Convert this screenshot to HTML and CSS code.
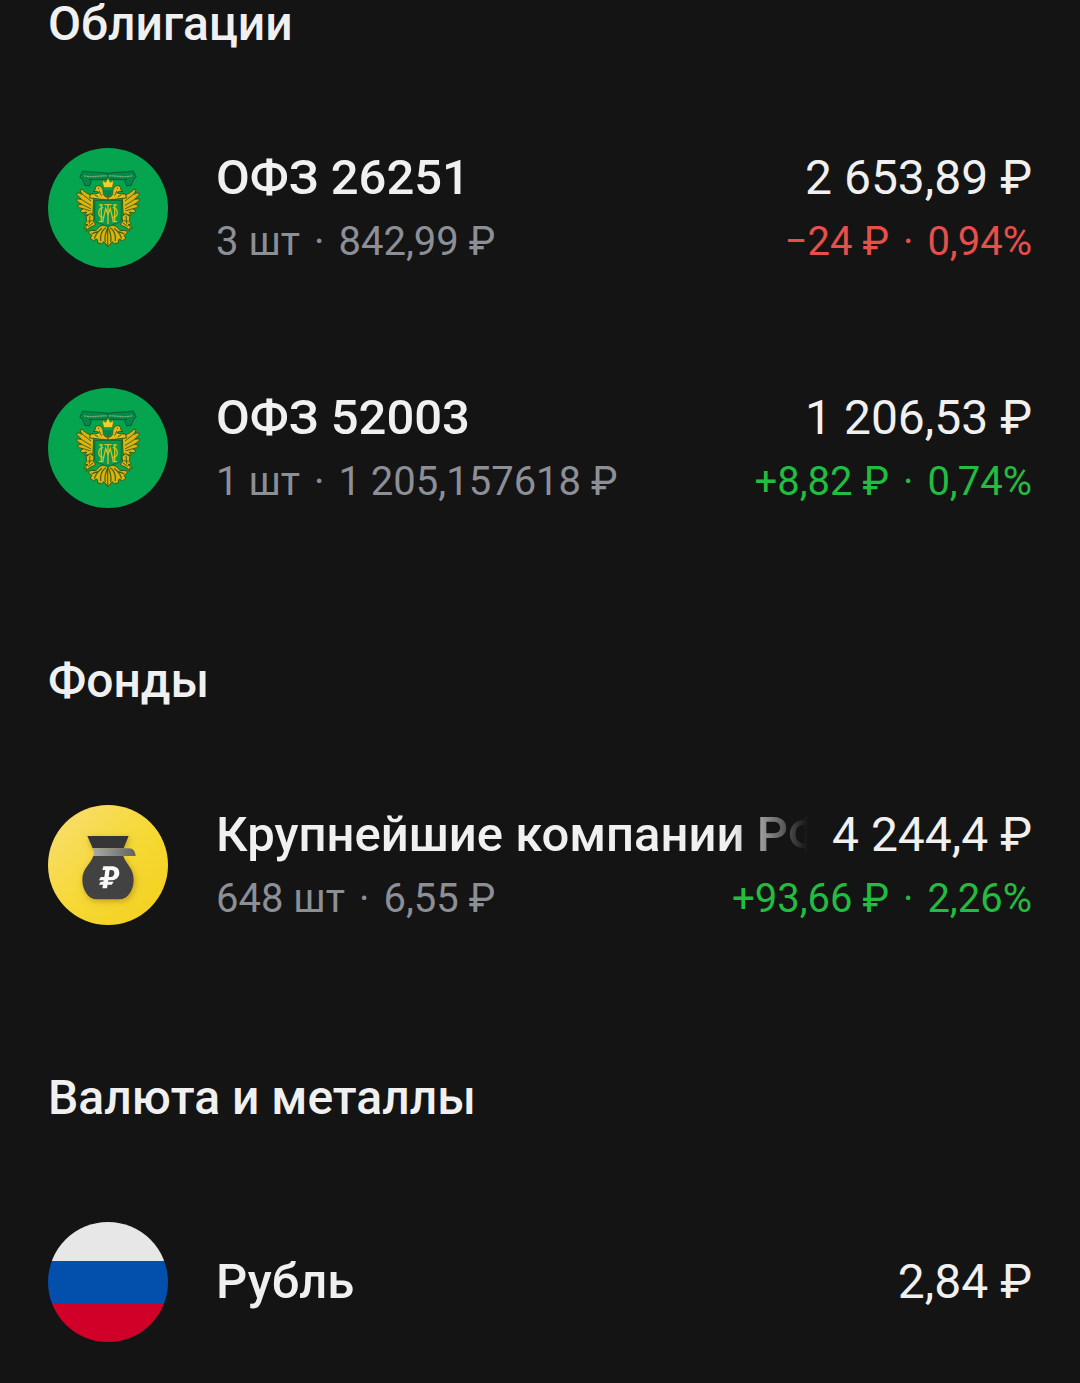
FILE: index.html
```
<!DOCTYPE html>
<html lang="ru">
<head>
    <meta charset="UTF-8">
    <meta name="viewport" content="width=device-width, initial-scale=1.0">
    <title>Портфель</title>
    <link rel="stylesheet" href="styles.css">
</head>
<body>
    <!-- shared icon parts -->
    <svg class="defs" width="0" height="0" aria-hidden="true">
        <defs>
            <g id="eagleHalf" stroke-linejoin="round" stroke-linecap="round">
                <!-- ribbon -->
                <path d="M204 100 C176 94 150 98 128 93 L120 110 L130 124 L134 136 L148 138 L154 122 L148 118 C170 122 186 116 204 118 Z" fill="#07864a" stroke="#0b5a35" stroke-width="3"/>
                <path d="M134 108 C160 113 180 106 204 108" fill="none" stroke="#6fb873" stroke-width="4" stroke-dasharray="3 5"/>
                <!-- wing -->
                <path d="M160 166 C144 164 134 156 126 148 L120 150 L126 163 L112 157 L111 164 L124 178 L109 176 L111 184 L125 193 L112 196 L116 203 L130 206 L120 213 L126 219 L140 216 L134 226 L158 222 Z" fill="#d9b414" stroke="#3d5a14" stroke-width="3"/>
                <path d="M126 162 L152 182 M124 178 L152 196 M125 193 L152 206 M132 207 L150 212" fill="none" stroke="#4c6510" stroke-width="3"/>
                <!-- head and neck -->
                <path d="M150 174 L204 180 L204 170 C196 172 192 166 190 160 C190 148 186 138 176 137 C168 137 164 143 166 149 L159 155 L170 154 L178 158 L164 162 L152 162 Z" fill="#e0bc1a" stroke="#3d5a14" stroke-width="3"/>
                <circle cx="176" cy="145" r="2" fill="#35500f"/>
                <path d="M178 154 L184 166 M166 166 L174 170 M190 164 L198 172" stroke="#4c6510" stroke-width="3" fill="none"/>
                <!-- leg with sceptre -->
                <path d="M150 221 L138 230 L140 244 L134 252 L144 254 L129 264 L140 265 L139 274 L148 263 L160 258 L168 252 L160 246 L162 230 Z" fill="#d6b015" stroke="#3d5a14" stroke-width="3"/>
                <path d="M150 228 L148 250 M144 244 L156 242 M146 258 L158 250" stroke="#4c6510" stroke-width="3" fill="none"/>
                <!-- tail -->
                <path d="M204 256 C186 252 174 262 168 272 L150 271 L146 279 L156 287 L150 294 L160 302 L171 297 L174 309 L184 311 L192 305 L204 320 Z" fill="#d9b414" stroke="#3d5a14" stroke-width="3"/>
                <path d="M196 264 C186 270 180 288 182 302 M184 266 C174 274 166 286 164 294 M176 274 L156 281 M202 266 C196 280 194 294 196 304" fill="none" stroke="#4c6510" stroke-width="4"/>
            </g>
            <linearGradient id="coinBg" x1="0" y1="0" x2="1" y2="1">
                <stop offset="0" stop-color="#f8de78"/>
                <stop offset="0.5" stop-color="#f6d936"/>
                <stop offset="1" stop-color="#f4cf1c"/>
            </linearGradient>
            <linearGradient id="bagTie" x1="0" y1="0" x2="1" y2="0">
                <stop offset="0" stop-color="#aaaaaa"/>
                <stop offset="1" stop-color="#626262"/>
            </linearGradient>
            <filter id="bagShadow" x="-30%" y="-30%" width="160%" height="160%">
                <feDropShadow dx="4" dy="6" stdDeviation="9" flood-color="#8a6a00" flood-opacity="0.5"/>
            </filter>
            <clipPath id="round">
                <circle cx="60" cy="60" r="60"/>
            </clipPath>
            <symbol id="ofz" viewBox="24 24 360 360">
                <circle cx="204" cy="204" r="180" fill="#05a44f"/>
                <use href="#eagleHalf"/>
                <use href="#eagleHalf" transform="translate(408 0) scale(-1 1)"/>
                <!-- crown -->
                <path d="M191 143 L186 120 L197 127 L204 113 L211 127 L222 120 L217 143 Z" fill="#f4d028" stroke="#4a6410" stroke-width="2"/>
                <path d="M191 151 H217 L214 163 L204 169 L194 163 Z" fill="#07864a"/>
                <!-- shield with monogram -->
                <path d="M164 181 H244 V240 C240 250 220 250 204 262 C188 250 168 250 164 240 Z" fill="#069a4b" stroke="#0b6a39" stroke-width="3"/>
                <g fill="none" stroke="#d6bd24" stroke-width="4">
                    <path d="M184 196 V245 M224 196 V245 M177 195 H189 M219 195 H231 M176 245 H190 M218 245 H232"/>
                    <path d="M188 245 L197 206 L204 222 L211 206 L220 245"/>
                    <path d="M204 194 V252 M193 194 H215"/>
                    <path d="M190 203 C172 201 172 235 190 232 M218 203 C236 201 236 235 218 232"/>
                </g>
            </symbol>
            <symbol id="moneyBag" viewBox="24 24 360 360">
                <circle cx="204" cy="204" r="180" fill="url(#coinBg)"/>
                <g filter="url(#bagShadow)">
                    <path d="M142 117 H266 L251 154 H158 Z" fill="#363636"/>
                    <path d="M160 177 H250 C260 204 281 214 281 248 C281 276 266 307 236 307 H172 C142 307 127 276 127 248 C127 214 150 204 160 177 Z" fill="#424242"/>
                </g>
                <path d="M158 154 H267 C280 154 286 164 287 177 H160 L162 166 Z" fill="url(#bagTie)"/>
                <!-- rouble -->
                <path fill="#fafafa" fill-rule="evenodd" d="M190 208 H215 C229 208 238 215 238 227 C238 242 227 250 211 250 H205 L204 254 H221 L215 263 H203 L201 274 H187 L189 263 H177 L182 254 H190 L191 250 H177 L182 240 H193 L196 219 H187 Z M209 219 L206 240 H212 C219 240 223 235 223 228 C223 222 219 219 214 219 Z"/>
            </symbol>
            <symbol id="flagRu" viewBox="0 0 120 120">
                <g clip-path="url(#round)">
                    <rect width="120" height="39" fill="#e7e7e7"/>
                    <rect y="39" width="120" height="42" fill="#034fac"/>
                    <rect y="81" width="120" height="39" fill="#d00028"/>
                </g>
            </symbol>
        </defs>
    </svg>

    <main class="portfolio">
        <section class="group">
            <h2>Облигации</h2>
            <ul class="assets">
                <li class="asset">
                    <svg class="logo" aria-hidden="true"><use href="#ofz"/></svg>
                    <div class="info">
                        <div class="name">ОФЗ 26251</div>
                        <div class="details"><span>3 шт</span><span>·</span><span>842,99 ₽</span></div>
                    </div>
                    <div class="value">
                        <div class="total">2 653,89 ₽</div>
                        <div class="details loss"><span>−24 ₽</span><span>·</span><span>0,94%</span></div>
                    </div>
                </li>
                <li class="asset">
                    <svg class="logo" aria-hidden="true"><use href="#ofz"/></svg>
                    <div class="info">
                        <div class="name">ОФЗ 52003</div>
                        <div class="details"><span>1 шт</span><span>·</span><span>1 205,157618 ₽</span></div>
                    </div>
                    <div class="value">
                        <div class="total">1 206,53 ₽</div>
                        <div class="details profit"><span>+8,82 ₽</span><span>·</span><span>0,74%</span></div>
                    </div>
                </li>
            </ul>
        </section>

        <section class="group">
            <h2>Фонды</h2>
            <ul class="assets">
                <li class="asset">
                    <svg class="logo" aria-hidden="true"><use href="#moneyBag"/></svg>
                    <div class="info">
                        <div class="name fade">Крупнейшие компании РФ</div>
                        <div class="details"><span>648 шт</span><span>·</span><span>6,55 ₽</span></div>
                    </div>
                    <div class="value">
                        <div class="total">4 244,4 ₽</div>
                        <div class="details profit"><span>+93,66 ₽</span><span>·</span><span>2,26%</span></div>
                    </div>
                </li>
            </ul>
        </section>

        <section class="group">
            <h2>Валюта и металлы</h2>
            <ul class="assets">
                <li class="asset">
                    <svg class="logo" aria-hidden="true"><use href="#flagRu"/></svg>
                    <div class="info">
                        <div class="name">Рубль</div>
                    </div>
                    <div class="value">
                        <div class="total">2,84 ₽</div>
                    </div>
                </li>
            </ul>
        </section>
    </main>
</body>
</html>
```
FILE: styles.css
```
* {
    box-sizing: border-box;
}
body {
    margin: 0;
    background-color: #141414;
    color: #f0f0f0;
    font-family: Roboto, sans-serif;
}
.defs {
    position: absolute;
}
.portfolio {
    padding: 0 48px 40px;
}
.group + .group {
    margin-top: 149px;
}
h2 {
    margin: 0 0 100px;
    font-size: 48px;
    font-weight: 500;
    line-height: 48px;
}
.assets {
    display: flex;
    flex-direction: column;
    gap: 120px;
    margin: 0;
    padding: 0;
    list-style: none;
}
.asset {
    display: grid;
    grid-template-columns: 120px minmax(0, 1fr) auto;
    align-items: center;
    height: 120px;
}
.logo {
    display: block;
    width: 120px;
    height: 120px;
}
.info {
    padding-left: 48px;
}
.name,
.total {
    font-size: 48px;
    line-height: 60px;
    white-space: nowrap;
}
.name {
    font-size: 49px;
    font-weight: 500;
}
.fade {
    overflow: hidden;
    margin-right: -76px;
    -webkit-mask-image: linear-gradient(to left, transparent, black 76px);
    mask-image: linear-gradient(to left, transparent, black 76px);
}
.value {
    display: flex;
    flex-direction: column;
    align-items: flex-end;
}
.details {
    display: flex;
    gap: 14px;
    margin-top: 8px;
    font-size: 40px;
    line-height: 52px;
    white-space: nowrap;
    color: #8d8f96;
}
.loss {
    color: #e5504a;
}
.profit {
    color: #22bd40;
}
```
